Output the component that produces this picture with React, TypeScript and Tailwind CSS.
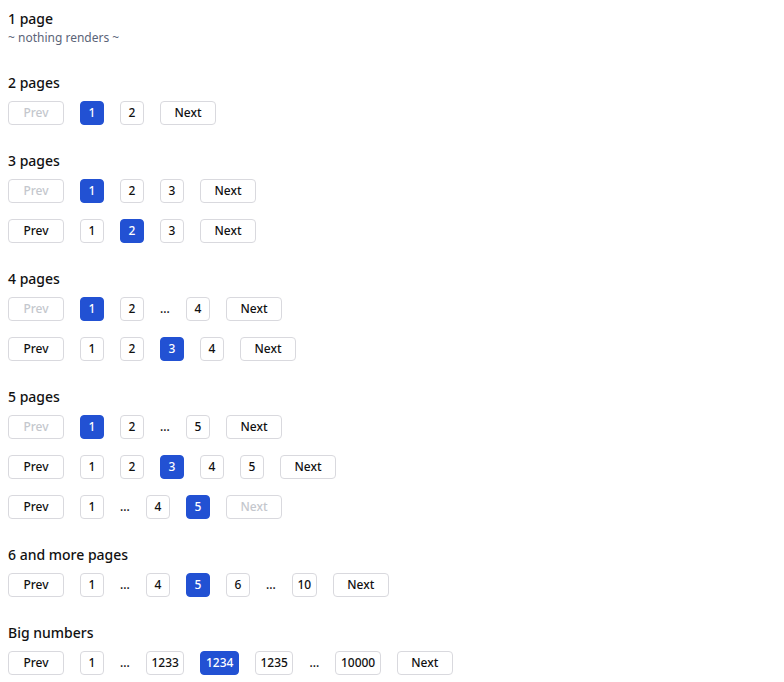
type Item = number | "gap"

function PageButton({ n, active }: { n: number; active?: boolean }) {
  return (
    <button
      className={`h-6 min-w-6 px-[4.5px] rounded border text-[12px] font-medium leading-none ${
        active ? "bg-[#2251d3] border-[#2251d3] text-white" : "bg-white border-[#d9d9de] text-[#111]"
      }`}
    >
      {n}
    </button>
  )
}

function NavButton({ label, disabled }: { label: string; disabled?: boolean }) {
  return (
    <button
      className={`h-6 w-14 rounded border border-[#d9d9de] bg-white text-[12px] font-medium leading-none ${
        disabled ? "text-[#c4c7cd]" : "text-[#111]"
      }`}
    >
      {label}
    </button>
  )
}

function Pager({ items, current, total }: { items: Item[]; current: number; total: number }) {
  return (
    <div className="flex items-center gap-4">
      <NavButton label="Prev" disabled={current === 1} />
      {items.map((it, i) =>
        it === "gap" ? (
          <span key={i} className="w-[10px] text-[12px] font-medium text-[#111] leading-none">
            ...
          </span>
        ) : (
          <PageButton key={i} n={it} active={it === current} />
        )
      )}
      <NavButton label="Next" disabled={current === total} />
    </div>
  )
}

function Section({ title, children }: { title: string; children: React.ReactNode }) {
  return (
    <section>
      <h2 className="text-[14px] leading-[21px] font-medium text-[#111] mb-2">{title}</h2>
      <div className="flex flex-col gap-4">{children}</div>
    </section>
  )
}

export default function App() {
  return (
    <div className="p-2 flex flex-col gap-[25px] bg-white min-h-screen" style={{ fontFamily: '"Noto Sans", sans-serif' }}>
      <section>
        <h2 className="text-[14px] leading-[21px] font-medium text-[#111]">1 page</h2>
        <p className="text-[12px] leading-[18px] text-[#5b6478]">~ nothing renders ~</p>
      </section>

      <Section title="2 pages">
        <Pager items={[1, 2]} current={1} total={2} />
      </Section>

      <Section title="3 pages">
        <Pager items={[1, 2, 3]} current={1} total={3} />
        <Pager items={[1, 2, 3]} current={2} total={3} />
      </Section>

      <Section title="4 pages">
        <Pager items={[1, 2, "gap", 4]} current={1} total={4} />
        <Pager items={[1, 2, 3, 4]} current={3} total={4} />
      </Section>

      <Section title="5 pages">
        <Pager items={[1, 2, "gap", 5]} current={1} total={5} />
        <Pager items={[1, 2, 3, 4, 5]} current={3} total={5} />
        <Pager items={[1, "gap", 4, 5]} current={5} total={5} />
      </Section>

      <Section title="6 and more pages">
        <Pager items={[1, "gap", 4, 5, 6, "gap", 10]} current={5} total={10} />
      </Section>

      <Section title="Big numbers">
        <Pager items={[1, "gap", 1233, 1234, 1235, "gap", 10000]} current={1234} total={10000} />
      </Section>
    </div>
  )
}
